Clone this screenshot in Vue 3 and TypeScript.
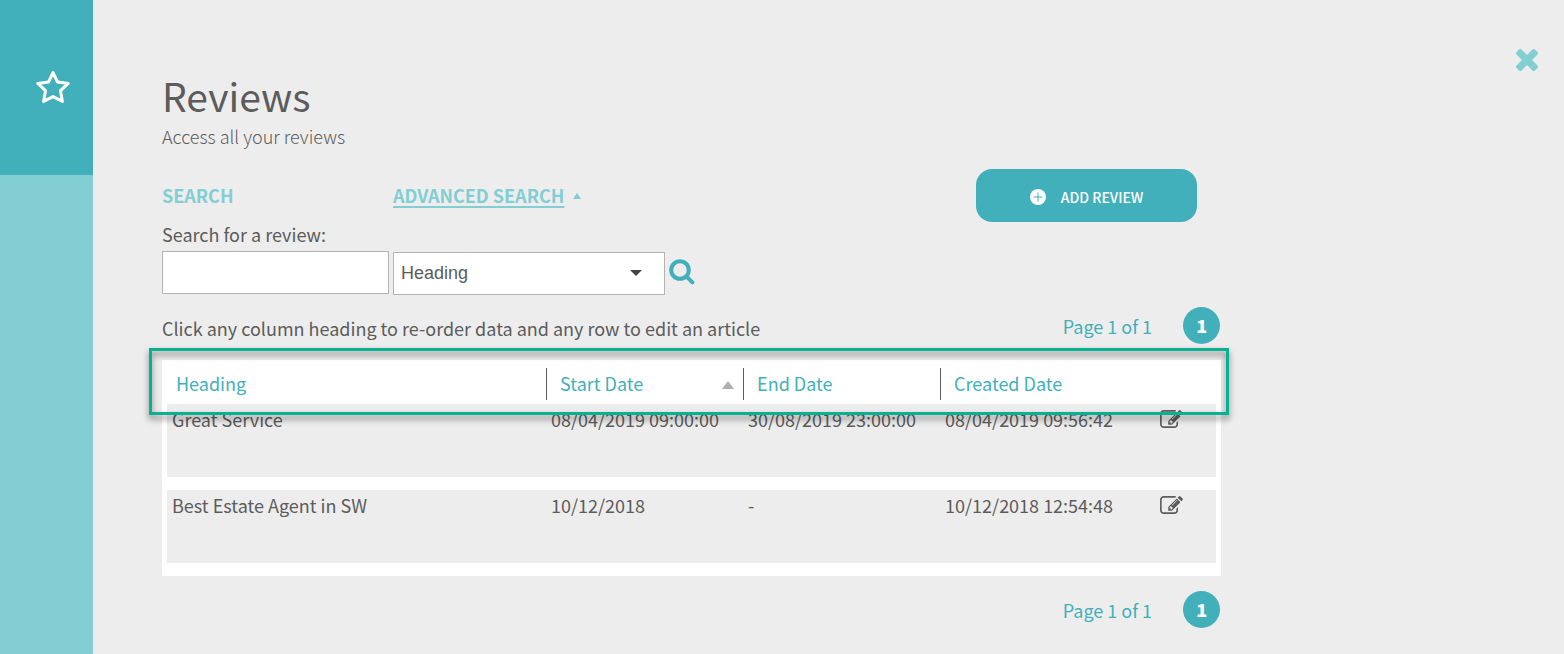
<script setup lang="ts">
import { ref } from 'vue'

interface Review {
  heading: string
  start: string
  end: string
  created: string
}

const term = ref('')
const field = ref('Heading')
const fields = ['Heading', 'Start Date', 'End Date', 'Created Date']
const reviews: Review[] = [
  { heading: 'Great Service', start: '08/04/2019 09:00:00', end: '30/08/2019 23:00:00', created: '08/04/2019 09:56:42' },
  { heading: 'Best Estate Agent in SW', start: '10/12/2018', end: '-', created: '10/12/2018 12:54:48' },
]
</script>

<template>
  <div class="page">
    <aside class="sidebar">
      <a class="sidebar-item" href="#" aria-label="Reviews">
        <svg class="star" viewBox="0 0 36 34" aria-hidden="true">
          <path d="M18 2.600 22.500 12 33.200 13.400 25.500 20.700 27.400 31.400 18 26.600 8.600 31.400 10.500 20.700 2.800 13.400 13.500 12Z" />
        </svg>
      </a>
    </aside>

    <main class="main">
      <button class="close" type="button" aria-label="Close">
        <svg viewBox="302 366 1188 1188" aria-hidden="true">
          <path d="M1490 1322q0 40-28 68l-136 136q-28 28-68 28t-68-28l-294-294-294 294q-28 28-68 28t-68-28l-136-136q-28-28-28-68t28-68l294-294-294-294q-28-28-28-68t28-68l136-136q28-28 68-28t68 28l294 294 294-294q28-28 68-28t68 28l136 136q28 28 28 68t-28 68l-294 294 294 294q28 28 28 68z" />
        </svg>
      </button>

      <div class="content">
        <h1>Reviews</h1>
        <p class="subtitle">Access all your reviews</p>

        <div class="tools">
          <form class="search" @submit.prevent>
            <h2>Search</h2>
            <div class="advanced">
              <a href="#">Advanced Search</a>
              <svg viewBox="0 0 8 8" aria-hidden="true"><path d="M0 8 4 2 8 8Z" /></svg>
            </div>
            <label for="term">Search for a review:</label>
            <input id="term" v-model="term" type="text" />
            <div class="select">
              <select v-model="field" aria-label="Search field">
                <option v-for="f in fields" :key="f">{{ f }}</option>
              </select>
              <svg viewBox="0 0 12 6" aria-hidden="true"><path d="M0 0H12L6 6Z" /></svg>
            </div>
            <button class="go" type="submit" aria-label="Search">
              <svg viewBox="0 0 26 26" aria-hidden="true">
                <circle cx="11" cy="11" r="8.8" />
                <path d="M17.5 17.5 23.4 23.4" />
              </svg>
            </button>
          </form>
          <button class="add" type="button">
            <svg viewBox="0 0 16 16" aria-hidden="true">
              <circle cx="8" cy="8" r="8" />
              <path d="M8 3.5V12.5M3.5 8H12.5" />
            </svg>
            <span>ADD REVIEW</span>
          </button>
        </div>

        <div class="info">
          <p>Click any column heading to re-order data and any row to edit an article</p>
          <nav class="pager" aria-label="Pages above the table">
            <span>Page 1 of 1</span>
            <a href="#">1</a>
          </nav>
        </div>

        <div class="panel">
          <table>
            <colgroup>
              <col class="c-heading" /><col class="c-date" /><col class="c-date" /><col class="c-created" /><col />
            </colgroup>
            <thead>
              <tr>
                <th><button type="button">Heading</button></th>
                <th>
                  <button type="button">
                    Start Date
                    <svg viewBox="0 0 12 10" aria-hidden="true"><path d="M0 10 6 2 12 10Z" /></svg>
                  </button>
                </th>
                <th><button type="button">End Date</button></th>
                <th><button type="button">Created Date</button></th>
                <th></th>
              </tr>
            </thead>
            <tbody>
              <tr v-for="r in reviews" :key="r.heading">
                <td>{{ r.heading }}</td>
                <td>{{ r.start }}</td>
                <td>{{ r.end }}</td>
                <td>{{ r.created }}</td>
                <td>
                  <button class="edit" type="button" :aria-label="'Edit ' + r.heading">
                    <svg viewBox="0 0 1792 1408" aria-hidden="true">
                      <path d="M888 1056l116-116-152-152-116 116v56h96v96h56zm440-720q-16-16-33 1l-350 350q-17 17-1 33t33-1l350-350q17-17 1-33zm80 594v190q0 119-84.500 203.500t-203.500 84.500h-832q-119 0-203.500-84.500t-84.500-203.500v-832q0-119 84.500-203.500t203.500-84.500h832q63 0 117 25 15 7 18 23 3 17-9 29l-49 49q-14 14-32 8-23-6-45-6h-832q-66 0-113 47t-47 113v832q0 66 47 113t113 47h832q66 0 113-47t47-113v-126q0-13 9-22l64-64q15-15 35-7t20 29zm-96-738l288 288-672 672h-288v-288zm444 132l-92 92-288-288 92-92q28-28 68-28t68 28l152 152q28 28 28 68t-28 68z" />
                    </svg>
                  </button>
                </td>
              </tr>
            </tbody>
          </table>
          <div class="highlight"></div>
        </div>

        <nav class="pager bottom" aria-label="Pages below the table">
          <span>Page 1 of 1</span>
          <a href="#">1</a>
        </nav>
      </div>
    </main>
  </div>
</template>

<style>
body {
  margin: 0;
}
</style>

<style scoped>
.page {
  --teal: #42b0ba;
  --light: #82ced2;
  --ink: #5c5c5c;
  display: flex;
  min-height: 100vh;
  background: #ededed;
  color: var(--ink);
  font: 18px/28px "Noto Sans CJK SC", "Noto Sans", sans-serif;
}
.page * {
  box-sizing: border-box;
}
h1, h2, p {
  margin: 0;
}
button {
  padding: 0;
  border: 0;
  background: none;
  font: inherit;
  color: inherit;
  cursor: pointer;
}
svg {
  display: block;
}
.sidebar {
  flex: 0 0 93px;
  background: var(--light);
}
.sidebar-item {
  display: flex;
  justify-content: center;
  align-items: center;
  height: 175px;
  padding: 0 0 2px 13px;
  background: var(--teal);
}
.star {
  width: 36px;
  height: 34px;
  fill: none;
  stroke: #fff;
  stroke-width: 3;
  stroke-linejoin: round;
}
.main {
  position: relative;
  flex: 1;
  min-width: 0;
}
.close {
  position: absolute;
  top: 49px;
  right: 26px;
}
.close svg {
  width: 22px;
  height: 22px;
  fill: var(--light);
}
.content {
  width: 72%;
  margin-left: 69px;
  padding: 71px 0 24px;
}
h1 {
  font-size: 39px;
  line-height: 48px;
  font-weight: 400;
}
.subtitle {
  margin-top: 3px;
  font-weight: 300;
}
.tools {
  display: flex;
  justify-content: space-between;
  align-items: flex-start;
  margin-top: 19px;
  padding-right: 24px;
}
.search {
  display: grid;
  grid-template-columns: 227px 272px 26px;
  column-gap: 4px;
  padding-top: 12px;
}
h2, .advanced {
  font-size: 18px;
  font-weight: 700;
  line-height: 28px;
  color: var(--light);
  text-transform: uppercase;
}
.advanced {
  grid-column: 2 / 4;
  display: flex;
  align-items: center;
  gap: 9px;
}
.advanced a {
  color: inherit;
  text-decoration: underline 2px;
  text-underline-offset: 3px;
}
.advanced svg {
  width: 8px;
  height: 8px;
  fill: var(--light);
}
label {
  grid-column: 1 / 4;
  margin: 11px 0 3px;
}
input, select {
  width: 100%;
  height: 43px;
  padding: 0 7px;
  border: 1px solid #b4b4b4;
  border-radius: 0;
  background: #fff;
  color: var(--ink);
  font: 18px "Liberation Sans", sans-serif;
}
.select {
  position: relative;
  margin-top: 1px;
}
select {
  display: block;
  padding-bottom: 2px;
  appearance: none;
}
.select svg {
  position: absolute;
  right: 23px;
  top: 18px;
  width: 12px;
  height: 6px;
  fill: #444;
  pointer-events: none;
}
.go {
  align-self: start;
  margin-top: 8px;
}
.go svg {
  width: 26px;
  height: 26px;
  fill: none;
  stroke: var(--teal);
  stroke-width: 4;
  stroke-linecap: round;
}
.add {
  display: flex;
  justify-content: center;
  align-items: center;
  gap: 15px;
  width: 221px;
  height: 53px;
  padding-top: 3px;
  border-radius: 16px;
  background: var(--teal);
  color: #fff;
  font: 500 14px/20px "Noto Sans CJK SC", sans-serif;
}
.add svg {
  width: 16px;
  height: 16px;
  fill: #fff;
}
.add path {
  stroke: var(--teal);
  stroke-width: 1;
}
.info {
  display: flex;
  justify-content: space-between;
  align-items: center;
  margin: 12px 0 16px;
}
.info p {
  padding-top: 5px;
}
.pager {
  display: flex;
  justify-content: flex-end;
  align-items: center;
  gap: 31px;
  padding-right: 1px;
  color: var(--teal);
}
.pager a {
  width: 37px;
  height: 37px;
  border-radius: 50%;
  background: var(--teal);
  color: #fff;
  font-weight: 900;
  line-height: 36px;
  text-align: center;
  text-decoration: none;
}
.bottom {
  margin-top: 15px;
}
.panel {
  position: relative;
  padding: 0 5px;
  background: #fff;
}
table {
  width: 100%;
  table-layout: fixed;
  border-collapse: separate;
  border-spacing: 0;
}
.c-heading {
  width: 36.13%;
}
.c-date {
  width: 18.78%;
}
.c-created {
  width: 20.5%;
}
th {
  height: 44px;
  padding: 4px 0 0;
  font-weight: 400;
  color: var(--teal);
}
th button {
  display: flex;
  justify-content: space-between;
  align-items: center;
  width: 100%;
  height: 32px;
  padding: 0 9px 2px 13px;
  border-left: 1px solid var(--ink);
}
th:first-child button {
  padding-left: 9px;
  border-left: 0;
}
th svg {
  width: 12px;
  height: 10px;
  margin-top: 2px;
  fill: #b0b0b0;
}
td {
  height: 86px;
  padding: 1px 0 0 5px;
  border-bottom: 13px solid #fff;
  background: #ededed;
  vertical-align: top;
}
.edit {
  display: block;
  margin-top: 5px;
}
.edit svg {
  width: 23px;
  height: 18px;
  fill: var(--ink);
}
.highlight {
  position: absolute;
  top: -12px;
  left: -13px;
  right: -8px;
  height: 67px;
  border: 3px solid #08b191;
  filter: drop-shadow(0 4px 3px rgba(0, 0, 0, 0.5));
  pointer-events: none;
}
</style>
